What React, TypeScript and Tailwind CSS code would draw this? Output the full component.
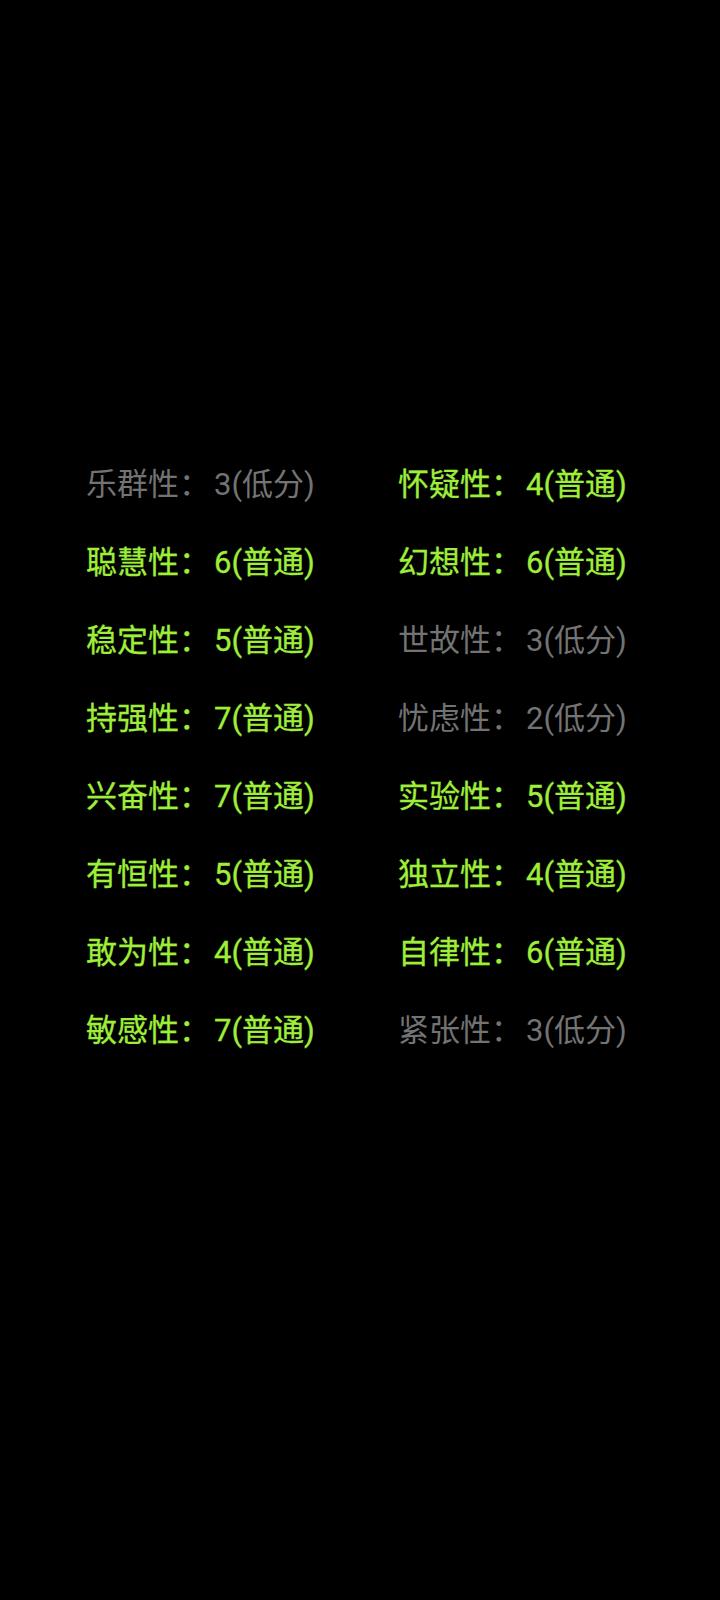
import React from "react";

const left: [string, string, boolean][] = [
  ["乐群性", "3(低分)", false],
  ["聪慧性", "6(普通)", true],
  ["稳定性", "5(普通)", true],
  ["持强性", "7(普通)", true],
  ["兴奋性", "7(普通)", true],
  ["有恒性", "5(普通)", true],
  ["敢为性", "4(普通)", true],
  ["敏感性", "7(普通)", true],
];
const right: [string, string, boolean][] = [
  ["怀疑性", "4(普通)", true],
  ["幻想性", "6(普通)", true],
  ["世故性", "3(低分)", false],
  ["忧虑性", "2(低分)", false],
  ["实验性", "5(普通)", true],
  ["独立性", "4(普通)", true],
  ["自律性", "6(普通)", true],
  ["紧张性", "3(低分)", false],
];

function Item({ d }: { d: [string, string, boolean] }) {
  const [k, v, ok] = d;
  return (
    <div
      className={
        "h-[78px] leading-[78px] text-[31px] whitespace-nowrap " +
        (ok
          ? "text-[#9fee3a] font-normal [-webkit-text-stroke:0.3px_#9fee3a]"
          : "text-[#737373] font-normal")
      }
    >
      {k}：<span className="ml-[4px]">{v}</span>
    </div>
  );
}

export default function App() {
  return (
    <div
      className="w-[720px] h-[1600px] bg-black pt-[446px] pl-[86px] flex"
      style={{ fontFamily: 'Roboto, "Noto Sans CJK SC", sans-serif' }}
    >
      <div className="w-[312px] flex flex-col">
        {left.map((d, i) => (
          <Item key={i} d={d} />
        ))}
      </div>
      <div className="flex flex-col">
        {right.map((d, i) => (
          <Item key={i} d={d} />
        ))}
      </div>
    </div>
  );
}
